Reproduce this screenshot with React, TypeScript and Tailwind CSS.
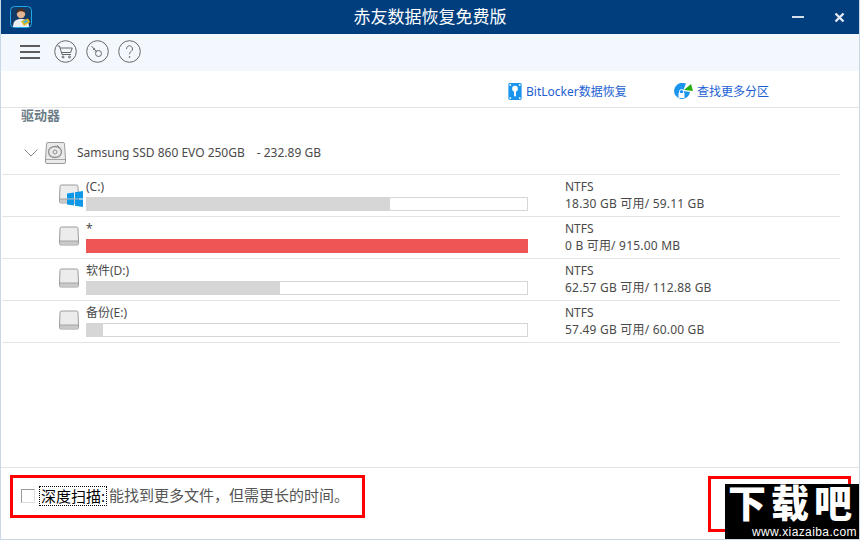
const FONT = "font-['Noto_Sans','Noto_Sans_CJK_SC',sans-serif]";

const drives = [
  { name: "(C:)", used: 68.8, red: false, windows: true, size: "18.30 GB 可用/ 59.11 GB" },
  { name: "*", used: 100, red: true, windows: false, size: "0 B 可用/ 915.00 MB" },
  { name: "软件(D:)", used: 43.9, red: false, windows: false, size: "62.57 GB 可用/ 112.88 GB" },
  { name: "备份(E:)", used: 3.6, red: false, windows: false, size: "57.49 GB 可用/ 60.00 GB" },
];

function AppLogo() {
  return (
    <svg width="22" height="22" viewBox="0 0 22 22" className="shrink-0">
      <rect x="0.5" y="0.5" width="21" height="21" rx="4" fill="#123a66" stroke="#22a7e8" />
      <path d="M3 21c0-6 3-8 8-8s8 2 8 8z" fill="#e8eef4" />
      <circle cx="11" cy="8" r="4.2" fill="#e2b48f" />
      <path d="M6.6 7.5C6.6 3.5 9 2.6 11 2.6s4.4 1 4.4 4.6c-1.500-1.600-3-2-4.400-2s-3 .6-4.400 2.300z" fill="#4a2f22" />
      <path d="M11 15l7-2.500 2 3.500-6 4z" fill="#e3b91e" />
      <path d="M13 15.500l4-1.500 1 1.500-3.500 2z" fill="#3db0e8" />
    </svg>
  );
}

function CircleIcon({ children }: { children: React.ReactNode }) {
  return (
    <svg width="23" height="23" viewBox="0 0 23 23" fill="none" stroke="#666" strokeWidth="1" className="shrink-0">
      <circle cx="11.5" cy="11.500" r="10.800" />
      {children}
    </svg>
  );
}

function DiskIcon({ windows }: { windows: boolean }) {
  return (
    <div className="relative w-[20px] h-[20px] shrink-0">
      <svg width="20" height="20" viewBox="0 0 20 20">
        <path d="M2.500 1h15a1.500 1.500 0 0 1 1.500 1.500L19.500 15v2.500a1.500 1.500 0 0 1-1.500 1.500H2a1.500 1.500 0 0 1-1.500-1.500V15L1 2.500A1.500 1.500 0 0 1 2.500 1z" fill="#ececec" stroke="#9b9b9b" />
        <path d="M1 15h18v2.500a1 1 0 0 1-1 1H2a1 1 0 0 1-1-1z" fill="#c9c9c9" />
        <path d="M1 15h18" stroke="#a5a5a5" />
      </svg>
      {windows && (
        <svg width="16" height="16" viewBox="0 0 16 16" className="absolute left-[8px] top-[7px]">
          <path d="M0 2.500l7-1v6H0zM8 1.300l8-1.300v7.500H8zM0 8.500h7v6l-7-1zM8 8.500h8V16l-8-1.200z" fill="#0d98e8" />
        </svg>
      )}
    </div>
  );
}

export default function App() {
  return (
    <div className={`${FONT} relative w-[860px] h-[540px] flex flex-col overflow-hidden bg-white border-x border-b border-[#c9d8e6] text-[12px] text-[#4a4a4a]`}>
      {/* title bar */}
      <div className="-mx-px h-[34px] shrink-0 bg-[#003e7e] flex items-center px-[10px] relative">
        <AppLogo />
        <div className="flex-1 text-center text-white text-[17px] pl-[36px]">赤友数据恢复免费版</div>
        <div className="flex items-center">
          <div className="w-[12px] h-[2px] bg-[#d5dfe9] mr-[30px]"></div>
          <svg width="11" height="11" viewBox="0 0 11 11" className="mr-[5px]">
            <path d="M1.500 1.500l8 8M9.500 1.500l-8 8" stroke="#e3e9f0" strokeWidth="2.400" />
          </svg>
        </div>
      </div>

      {/* toolbar */}
      <div className="h-[37px] shrink-0 bg-[#f3f7fe] flex items-center pl-[19px] pb-[2px]">
        <div className="flex flex-col gap-[4px] w-[20px] mr-[14px]">
          <div className="h-[2px] bg-[#5c5c5c]"></div>
          <div className="h-[2px] bg-[#5c5c5c]"></div>
          <div className="h-[2px] bg-[#5c5c5c]"></div>
        </div>
        <div className="flex gap-[9px]">
          <CircleIcon>
            <path d="M3.500 6h2l2.500 8.500h9M6.200 8h12l-1.500 4.500H7.500" />
            <circle cx="9" cy="17" r="1" />
            <circle cx="15.500" cy="17" r="1" />
          </CircleIcon>
          <CircleIcon>
            <circle cx="12.500" cy="13.500" r="3" />
            <path d="M10.500 11.500L5.500 6M7 10l1.800-1.800M9 11.500l1-1" />
          </CircleIcon>
          <CircleIcon>
            <path d="M8.500 9c0-4.200 6-4.200 6 0 0 2.400-3 2.600-3 5.200" />
            <circle cx="11.500" cy="17" r=".5" />
          </CircleIcon>
        </div>
      </div>

      {/* links */}
      <div className="h-[37px] shrink-0 border-b border-[#e4e4e4] flex items-center pl-[507px] pt-[5px] text-[#1d5fd3] text-[12px] leading-none">
        <svg width="14" height="17" viewBox="0 0 14 18" className="shrink-0 mr-[4px]">
          <rect width="14" height="18" rx="1.500" fill="#1b94ee" />
          <circle cx="7" cy="6" r="3" fill="#fff" />
          <path d="M6 8h2v6H6z" fill="#fff" />
          <circle cx="2" cy="2" r="1" fill="#fff" />
          <circle cx="12" cy="2" r="1" fill="#fff" />
          <circle cx="2" cy="16" r="1" fill="#fff" />
          <circle cx="12" cy="16" r="1" fill="#fff" />
        </svg>
        <span className="w-[148px]">BitLocker数据恢复</span>
        <svg width="20" height="17" viewBox="0 0 20 17" className="shrink-0 mr-[3px]">
          <path d="M9 0a8 8 0 0 1 3 .500L9 8l7 1a8 8 0 1 1-7-9z" fill="#1b94ee" />
          <path d="M10 7l7-6 2 7z" fill="#27ad12" />
          <rect x="4.500" y="10" width="6" height="5" fill="#fff" />
          <path d="M5.500 10V8.500a2 2 0 0 1 4 0V10" stroke="#fff" fill="none" />
        </svg>
        <span>查找更多分区</span>
      </div>

      {/* drives */}
      <div className="flex-1 pl-[1px] pr-[19px]">
        <div className="pl-[19px] h-[20px] font-bold text-[13px] leading-[14px] text-[#6d7d88]">驱动器</div>
        <div className="h-[47px] border-b border-[#e4e4e4] flex items-center pl-[22px] pt-[4px]">
          <svg width="14" height="8" viewBox="0 0 14 8" fill="none" stroke="#8c8c8c" className="mr-[7px]">
            <path d="M.5.500L7 7 13.500.500" />
          </svg>
          <svg width="21" height="22" viewBox="0 0 21 22" className="mr-[11px]">
            <path d="M3 .5h15a1.500 1.500 0 0 1 1.500 1.500L20.500 17v3a1.500 1.500 0 0 1-1.500 1.500H2A1.500 1.500 0 0 1 .5 20v-3L1.500 2A1.500 1.500 0 0 1 3 .5z" fill="#eaeaea" stroke="#9b9b9b" />
            <path d="M1 17.500h19" stroke="#a5a5a5" />
            <ellipse cx="10" cy="10" rx="6.500" ry="5.500" fill="none" stroke="#8f8f8f" strokeWidth="1.300" />
            <circle cx="10" cy="10" r="2" fill="none" stroke="#8f8f8f" />
            <path d="M12 3l3 3" stroke="#8f8f8f" />
          </svg>
          <span>Samsung SSD 860 EVO 250GB</span>
          <span className="ml-[12px]">- 232.89 GB</span>
        </div>
        {drives.map((d) => (
          <div key={d.name} className="h-[42px] border-b border-[#e4e4e4] flex">
            <div className="w-[84px] shrink-0 pl-[57px] pt-[9px]">
              <DiskIcon windows={d.windows} />
            </div>
            <div className="w-[442px] shrink-0 pt-[3px]">
              <div className="h-[19px] leading-[17px]">{d.name}</div>
              <div className={`h-[14px] border ${d.red ? "border-[#ee5555]" : "border-[#d6d6d6]"} bg-white`}>
                <div
                  className={`h-full ${d.red ? "bg-[#ee5555]" : "bg-[#d6d6d6]"}`}
                  style={{ width: `${d.used}%` }}
                ></div>
              </div>
            </div>
            <div className="pl-[37px] pt-[3px] leading-[17px]">
              <div>NTFS</div>
              <div className="tracking-[0.2px]">{d.size}</div>
            </div>
          </div>
        ))}
      </div>

      {/* footer */}
      <div className="h-[72px] shrink-0 border-t border-[#e4e4e4] pl-[9px] pt-[7px]">
        <div className="w-[355px] h-[43px] border-[3px] border-[#ff0000] flex items-center pl-[8px] pb-[2px] text-[15px] text-[#555]">
          <span className="w-[14px] h-[14px] border border-[#9a9a9a] border-r-[#dddddd] border-b-[#dddddd] bg-white mr-[4px] shrink-0"></span>
          <span className="border border-dotted border-black text-black px-[1px] h-[20px] leading-[18px] whitespace-nowrap">深度扫描:</span>
          <span className="ml-[2px] whitespace-nowrap">能找到更多文件，但需更长的时间。</span>
        </div>
      </div>

      {/* annotation + watermark */}
      <div className="absolute left-[707px] top-[476px] w-[143px] h-[56px] border-[3px] border-[#ff0000]"></div>
      <div className="absolute right-[-1px] bottom-[-1px] w-[135px] h-[56px] bg-black text-white flex flex-col">
        <div className="font-['Liberation_Sans','Noto_Sans_CJK_SC',sans-serif] font-black text-[38px] leading-[41px] h-[41px] pl-[3px] tracking-[5px] whitespace-nowrap">下载吧</div>
        <div className="font-['Liberation_Sans',sans-serif] text-[12px] leading-[14px] text-right pr-[3px] tracking-[0.4px] whitespace-nowrap">www.xiazaiba.com</div>
      </div>
    </div>
  );
}
